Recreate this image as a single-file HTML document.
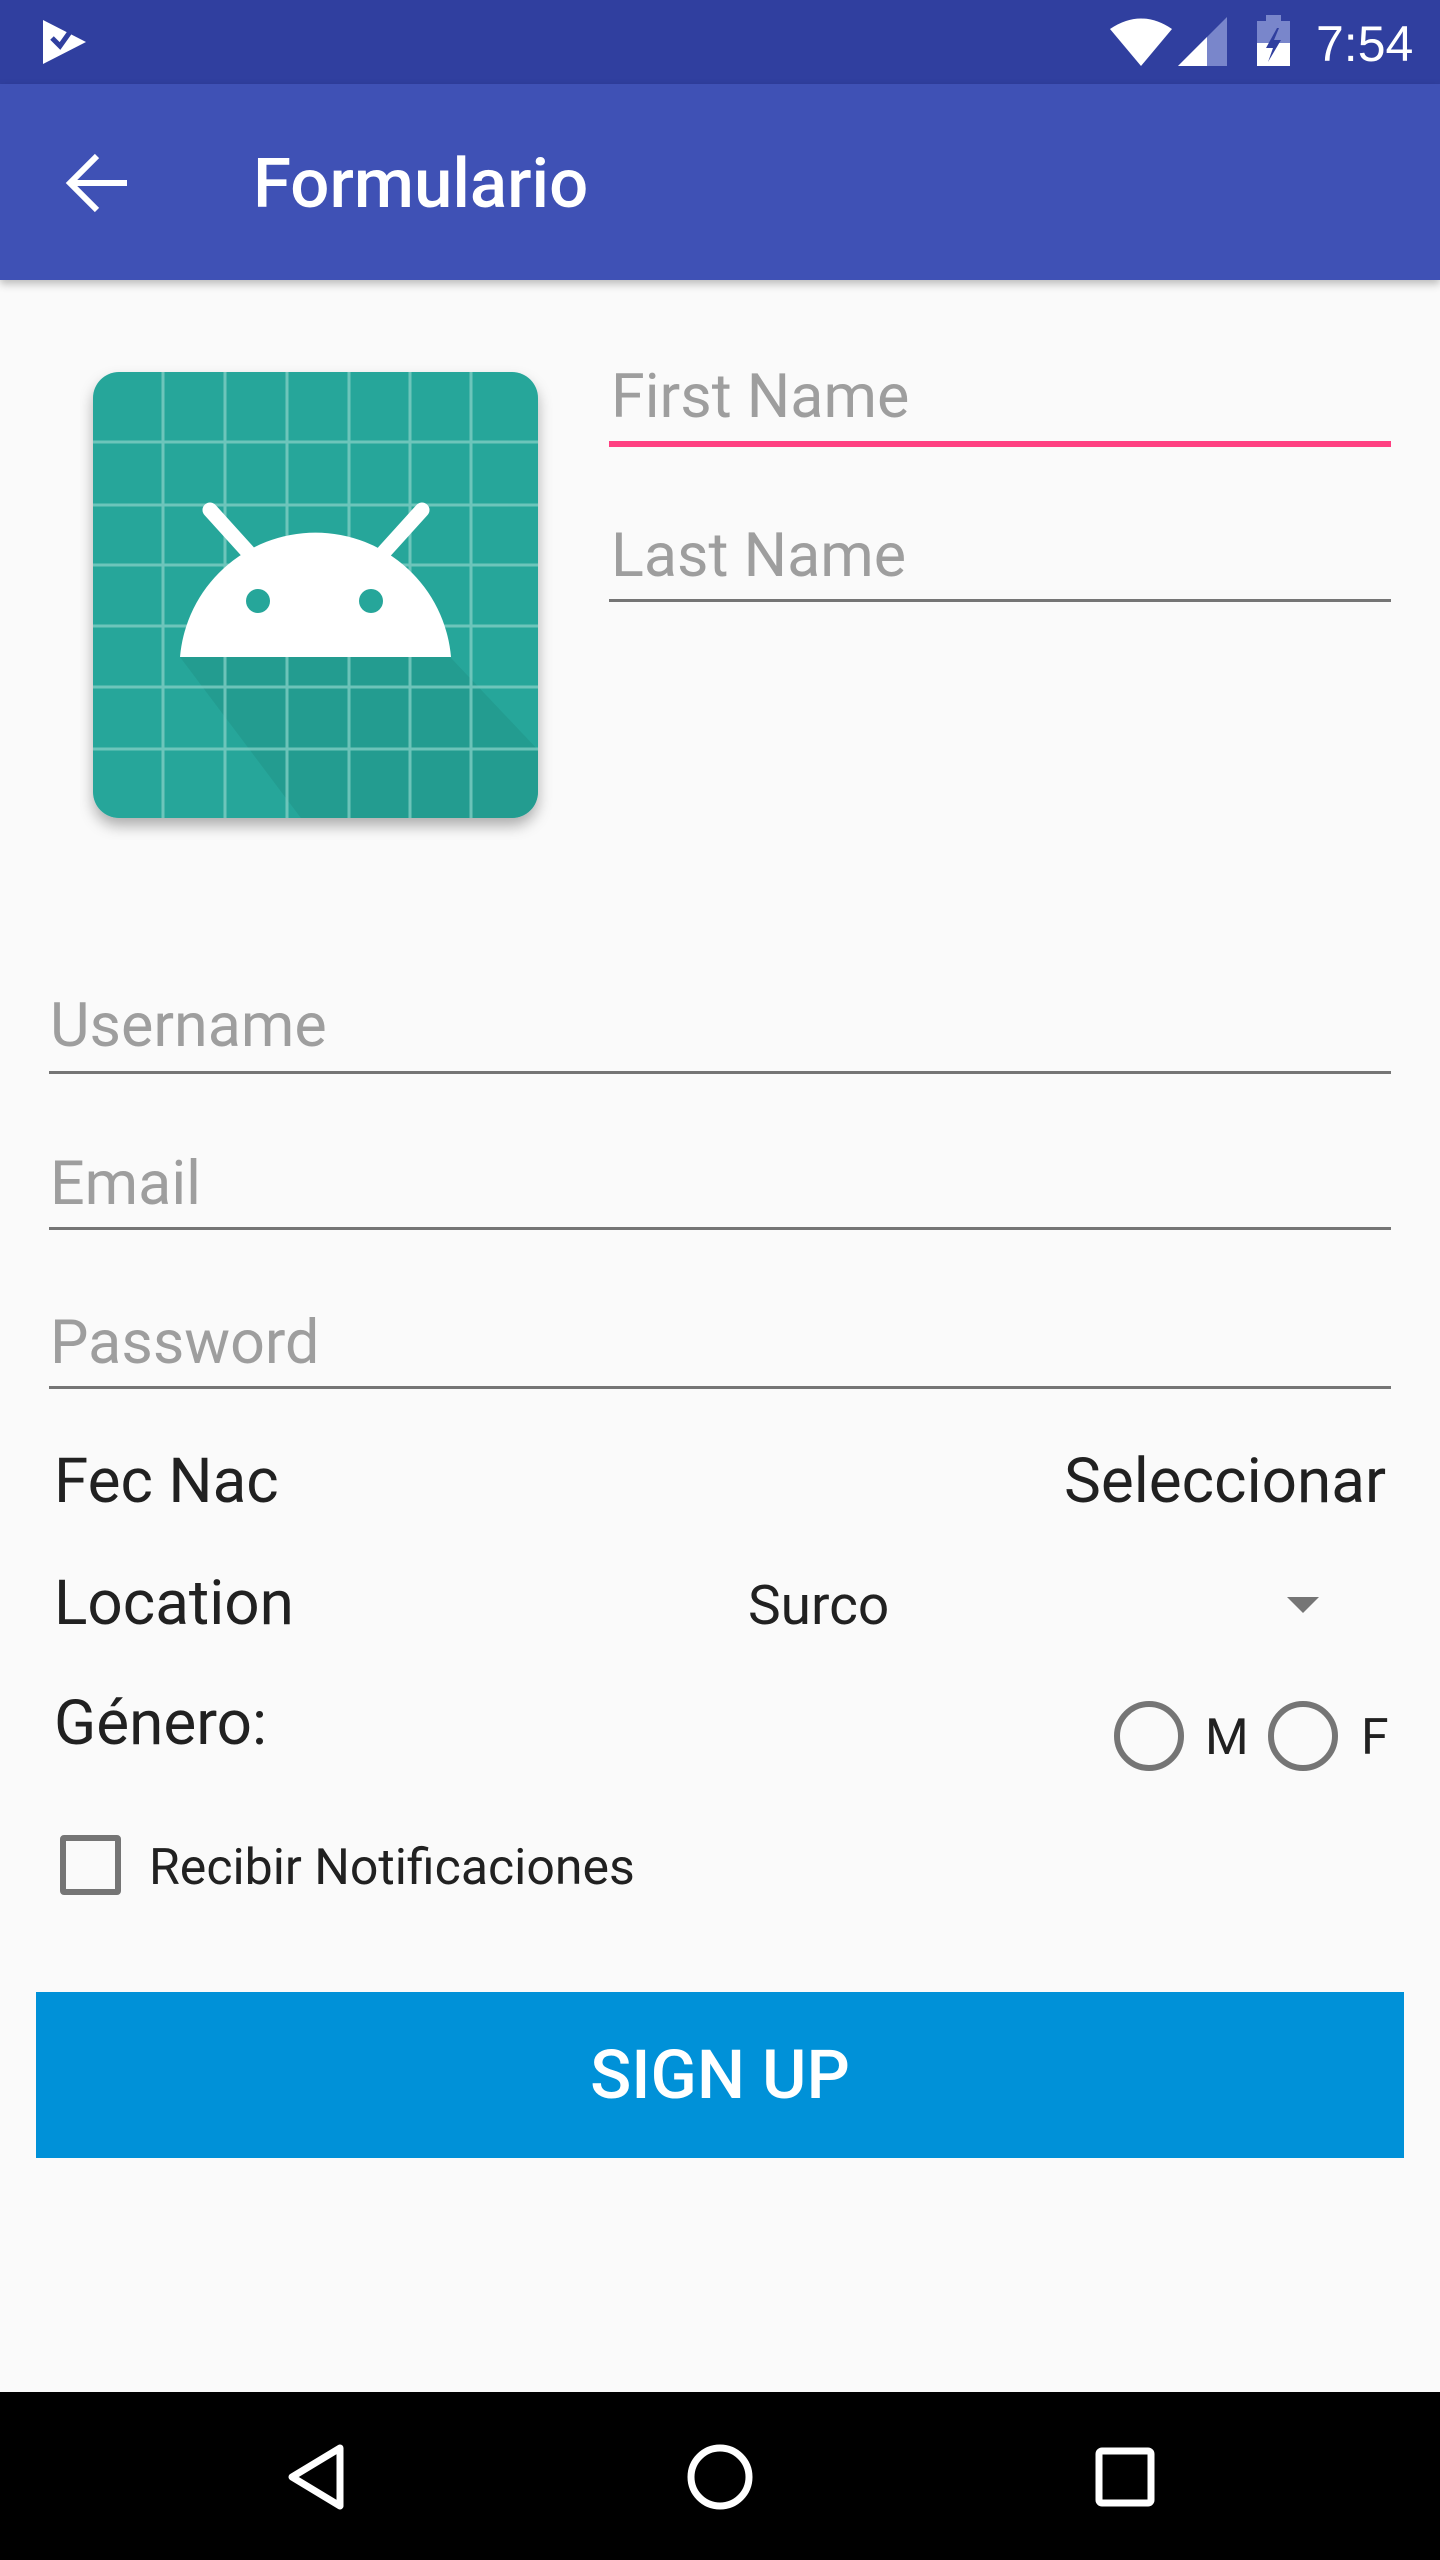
<!DOCTYPE html>
<html><head><meta charset="utf-8"><style>
*{margin:0;padding:0;box-sizing:border-box}
body{width:1440px;height:2560px;background:#fafafa;position:relative;overflow:hidden;font-family:"Roboto","Liberation Sans",sans-serif}
.a{position:absolute;white-space:nowrap}
.hint{color:#9e9e9e;font-size:61px}
.line{position:absolute;height:3px;background:#757575}
.lbl{color:#212121;font-size:62px}
</style></head><body>
<div class="a" style="left:0;top:0;width:1440px;height:84px;background:#303f9f"></div>
<svg class="a" style="left:0;top:0" width="1440" height="84">
<path d="M43 20 L86 42 L43 64 Z" fill="#fff"/>
<path d="M52 38 L60 46 L77 22" stroke="#303f9f" stroke-width="5" fill="none"/>
<path d="M1110 29 Q1141 8 1172 29 L1141 66 Z" fill="#fff"/>
<path d="M1178 66 L1227 17 L1227 66 Z" fill="#7986cb"/>
<path d="M1178 66 L1207 37 L1207 66 Z" fill="#fff"/>
<rect x="1257" y="21" width="33" height="45" fill="#7986cb"/><rect x="1266" y="15" width="15" height="7" fill="#7986cb"/>
<rect x="1257" y="43" width="33" height="23" fill="#fff"/>
<path d="M1277 28 L1266 48 L1273 48 L1268 62 L1281 40 L1274 40 L1279 28Z" fill="#303f9f"/>
<text x="1316" y="61" fill="#fff" font-size="50" font-family="Liberation Sans,sans-serif">7:54</text>
</svg>
<div class="a" style="left:0;top:84px;width:1440px;height:196px;background:#3f51b5;box-shadow:0 4px 8px rgba(0,0,0,.25)"></div>
<svg class="a" style="left:60px;top:150px" width="80" height="70"><path d="M10 33 H67 M37 6 L10 33 L37 60" stroke="#fff" stroke-width="6" fill="none"/></svg>
<div class="a" style="left:253px;top:143px;color:#fff;font-size:69px;font-weight:500">Formulario</div>

<svg class="a" style="left:80px;top:360px" width="480" height="480">
<defs><filter id="s" x="-10%" y="-10%" width="120%" height="125%"><feDropShadow dx="0" dy="8" stdDeviation="7" flood-opacity=".3"/></filter>
<clipPath id="c"><rect x="13" y="12" width="445" height="446" rx="26"/></clipPath></defs>
<rect x="13" y="12" width="445" height="446" rx="26" fill="#26a69a" filter="url(#s)"/>
<g clip-path="url(#c)">
<path d="M100 297 L370 297 L458 390 L458 470 L230 470 Z" fill="#1f9285" opacity=".5"/>
<g stroke="#7fcdc4" stroke-width="3" opacity=".8">
<path d="M83 0V480M145 0V480M207 0V480M269 0V480M330 0V480M391 0V480"/>
<path d="M0 82H480M0 145H480M0 205H480M0 266H480M0 327H480M0 389H480"/>
</g></g>
<path d="M100 297 A136 136 0 0 1 371 297 Z" fill="#fff"/>
<path d="M130 150 L168 192 M342 150 L304 192" stroke="#fff" stroke-width="15" stroke-linecap="round"/>
<circle cx="178" cy="241" r="12" fill="#26a69a"/><circle cx="291" cy="241" r="12" fill="#26a69a"/>
</svg>

<div class="a hint" style="left:611px;top:360px">First Name</div>
<div class="a" style="left:609px;top:441px;width:782px;height:6px;background:#ff4081"></div>
<div class="a hint" style="left:611px;top:519px">Last Name</div>
<div class="line" style="left:609px;top:599px;width:782px"></div>

<div class="a hint" style="left:50px;top:989px">Username</div>
<div class="line" style="left:49px;top:1071px;width:1342px"></div>
<div class="a hint" style="left:50px;top:1147px">Email</div>
<div class="line" style="left:49px;top:1227px;width:1342px"></div>
<div class="a hint" style="left:50px;top:1306px">Password</div>
<div class="line" style="left:49px;top:1386px;width:1342px"></div>

<div class="a lbl" style="left:54px;top:1445px">Fec Nac</div>
<div class="a lbl" style="right:54px;top:1445px">Seleccionar</div>
<div class="a lbl" style="left:54px;top:1567px">Location</div>
<div class="a" style="left:748px;top:1574px;font-size:55px;color:#212121">Surco</div>
<svg class="a" style="left:1285px;top:1595px" width="36" height="20"><path d="M2 2 H34 L18 18Z" fill="#757575"/></svg>
<div class="a lbl" style="left:54px;top:1687px">Género:</div>
<svg class="a" style="left:1110px;top:1700px" width="290" height="75">
<circle cx="39" cy="36" r="32" fill="none" stroke="#757575" stroke-width="6"/>
<circle cx="193" cy="36" r="32" fill="none" stroke="#757575" stroke-width="6"/>
</svg>
<div class="a" style="left:1205px;top:1709px;font-size:50px;color:#212121">M</div>
<div class="a" style="left:1361px;top:1709px;font-size:50px;color:#212121">F</div>
<div class="a" style="left:60px;top:1835px;width:61px;height:60px;border:6px solid #757575;border-radius:4px"></div>
<div class="a" style="left:149px;top:1839px;font-size:50px;color:#212121">Recibir Notificaciones</div>

<div class="a" style="left:36px;top:1992px;width:1368px;height:166px;background:#0091d8;color:#fff;font-size:68px;font-weight:500;text-align:center;line-height:166px">SIGN UP</div>

<div class="a" style="left:0;top:2392px;width:1440px;height:168px;background:#000"></div>
<svg class="a" style="left:0;top:2392px" width="1440" height="168">
<path d="M340 56 L292 85 L340 114 Z" fill="none" stroke="#fff" stroke-width="7" stroke-linejoin="round"/>
<circle cx="720" cy="85" r="29" fill="none" stroke="#fff" stroke-width="7"/>
<rect x="1099" y="59" width="52" height="52" rx="3" fill="none" stroke="#fff" stroke-width="7"/>
</svg>
</body></html>
